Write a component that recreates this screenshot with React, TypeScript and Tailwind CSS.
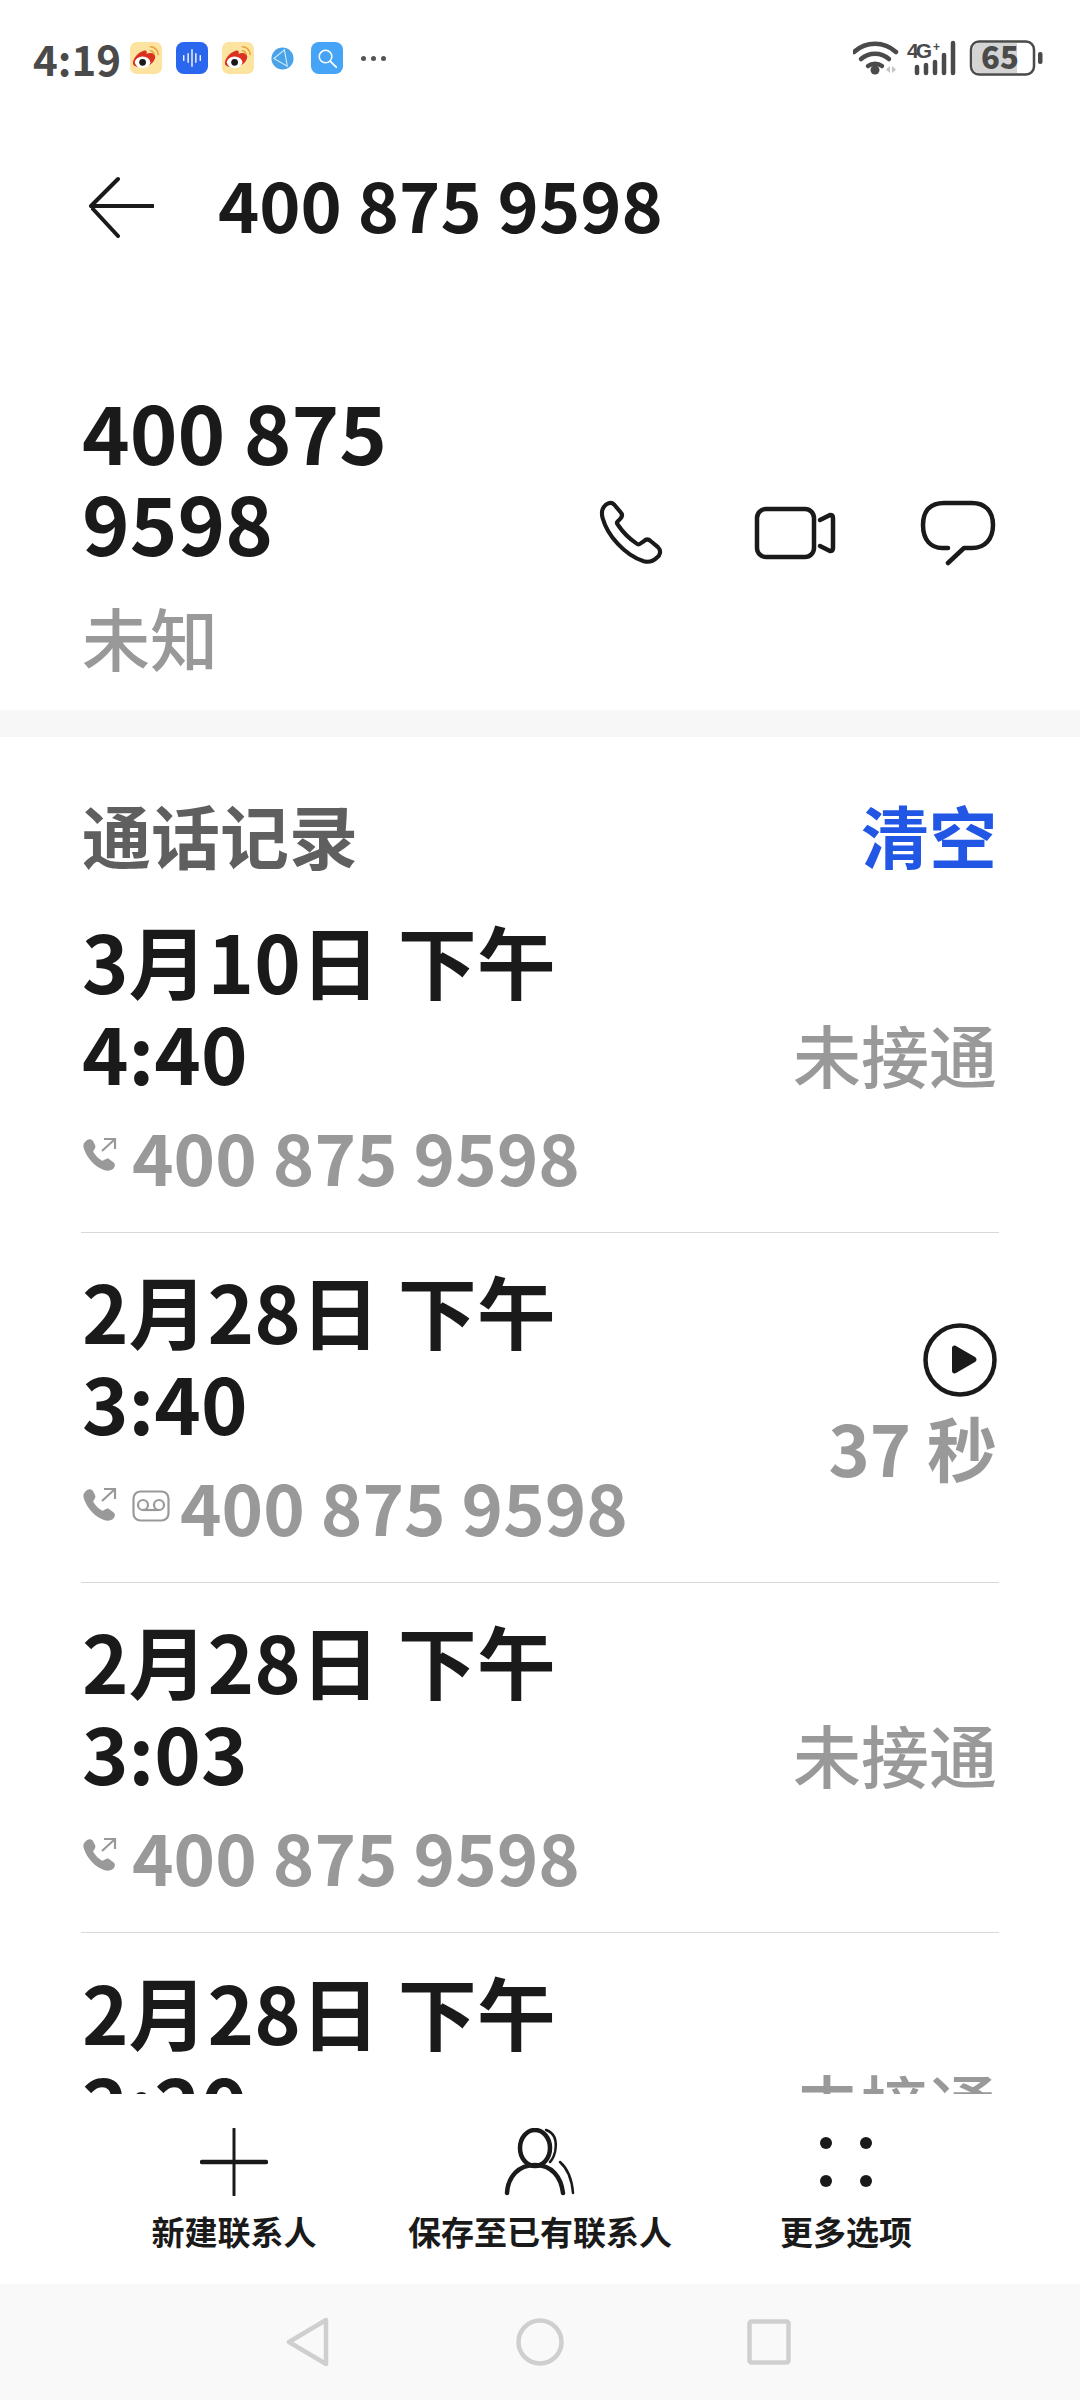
const FONT = "font-['Noto_Sans_CJK_SC','Noto_Sans',sans-serif]";

function WeiboIcon() {
  return (
    <svg width="32" height="32" viewBox="0 0 33 33">
      <rect width="33" height="33" rx="7" fill="#fde3a0" />
      <path d="M3 22c0-5 5-11 11-13 3-1 4 1 3 3 4-1 9-1 9 3 0 6-7 11-14 11-5 0-9-1-9-4z" fill="#d9301f" />
      <ellipse cx="13" cy="21" rx="8" ry="6" fill="#fff" />
      <circle cx="13" cy="21" r="3.5" fill="#1a1a1a" />
      <path d="M21 5c4 0 8 3 8 8M21 9c2 0 4 2 4 4" stroke="#e8a33d" strokeWidth="1.6" fill="none" strokeLinecap="round" />
    </svg>
  );
}

function VoiceIcon() {
  return (
    <svg width="32" height="32" viewBox="0 0 33 33">
      <rect width="33" height="33" rx="8" fill="#2a66ee" />
      <path d="M8 14v5M12.5 12v9M16.500 8v17M20.500 12v9M25 14v5" stroke="#fff" strokeWidth="1.4" strokeLinecap="round" />
    </svg>
  );
}

function GlobeIcon() {
  return (
    <svg width="23" height="23" viewBox="0 0 24 24">
      <circle cx="12" cy="12" r="11.500" fill="#4aa3e8" />
      <path d="M14 3 3 12l14 8zM14 3l3 17M3 12" stroke="#d5ecfb" strokeWidth="1.1" fill="none" />
    </svg>
  );
}

function SearchApp() {
  return (
    <svg width="32" height="32" viewBox="0 0 33 33">
      <rect width="33" height="33" rx="8" fill="#45a4f5" />
      <circle cx="15" cy="15" r="6.500" stroke="#fff" strokeWidth="1.600" fill="none" />
      <path d="m20 20 6 6" stroke="#fff" strokeWidth="1.800" strokeLinecap="round" />
    </svg>
  );
}

function StatusRight() {
  return (
    <svg width="195" height="36" viewBox="0 0 195 36" className="text-[#4a4a4a]">
      <g fill="none" stroke="currentColor" strokeLinecap="round" strokeWidth="4.500">
        <path d="M1 12C13 1 31 1 43 12" />
        <path d="M8 19c8-7 20-7 28 0" />
        <path d="M15 26c4-3 10-3 14 0" />
      </g>
      <circle cx="22" cy="30" r="4.500" fill="currentColor" />
      <path d="M33 29.500l4-3.500v7zM39 26l4 3.500-4 3.500z" fill="#c4c4c4" />
      <text x="54" y="18" fontSize="21" fontWeight="700" fill="currentColor" fontFamily="'Liberation Sans',sans-serif" textLength="25">4G</text>
      <text x="80" y="11" fontSize="12" fontWeight="700" fill="currentColor" fontFamily="'Liberation Sans',sans-serif">+</text>
      <g stroke="currentColor" strokeWidth="4.500" strokeLinecap="round">
        <path d="M64 27v6M73 25v8M82 22v11M91 15v18M100 3v30" />
      </g>
      <rect x="118" y="1.500" width="63" height="33" rx="8" fill="#fff" stroke="currentColor" strokeWidth="2.500" />
      <path d="M120 9c0-4 2-6 6-6h38v30h-38c-4 0-6-2-6-6z" fill="#d4d4d4" />
      <text x="147" y="29" textAnchor="middle" fontSize="31" fontWeight="900" fill="currentColor" fontFamily="'Noto Sans CJK SC',sans-serif">65</text>
      <rect x="185" y="12" width="4.500" height="12" rx="2" fill="currentColor" />
    </svg>
  );
}

function PhoneOutline() {
  return (
    <svg width="66" height="66" viewBox="0 6 56 56" fill="none" stroke="#1a1a1a" strokeWidth="3.500" strokeLinejoin="round">
      <path d="M4 12c2-3 6-5 9-2l5 6c2 2 2 4 0 6l-2 2c-1 1-1 2 0 3 4 6 10 12 16 16 1 1 2 1 3 0l3-2c2-2 4-2 6 0l6 5c3 3 2 7-1 9-3 3-7 4-11 3C22 53 7 36 3 21c-1-4-1-6 1-9z" />
    </svg>
  );
}

function VideoOutline() {
  return (
    <svg width="82" height="54" viewBox="0 0 82 54" fill="none" stroke="#1a1a1a" strokeWidth="4.500" strokeLinejoin="round">
      <rect x="3" y="3" width="57" height="48" rx="9" />
      <path d="M66 14l10-5c2 0 3 1 3 3v30c0 2-1 3-3 3l-10-5" strokeLinecap="round" />
    </svg>
  );
}

function ChatOutline() {
  return (
    <svg width="76" height="66" viewBox="0 0 76 66" fill="none" stroke="#1a1a1a" strokeWidth="4.500" strokeLinecap="round" strokeLinejoin="round">
      <path d="M28 48h-6C11 48 3 40 3 25S11 3 24 3h28c13 0 21 8 21 22s-8 23-21 23h-8L28 63" />
    </svg>
  );
}

function OutgoingCall() {
  return (
    <svg width="38" height="38" viewBox="0 0 38 38" fill="#999999">
      <path d="M3 6c2-3 6-4 8-1l2 4c1 2 0 3-1 5-1 1-1 2 0 3 2 3 4 5 7 7 1 1 2 1 3 0 2-1 4-2 5-1l4 3c3 2 2 5 0 7-3 2-6 2-9 1C13 31 5 22 2 13 1 10 1 8 3 6z" />
      <path d="M20 15 33 3M22 3h11v10" fill="none" stroke="#999999" strokeWidth="2.200" />
    </svg>
  );
}

function VoicemailIcon() {
  return (
    <svg width="38" height="32" viewBox="0 0 38 32" fill="none" stroke="#999999" strokeWidth="2.200">
      <rect x="1.500" y="1.500" width="35" height="29" rx="7" />
      <circle cx="11" cy="15" r="5" />
      <circle cx="27" cy="15" r="5" />
      <path d="M11 20h16" />
    </svg>
  );
}

function PlayCircle() {
  return (
    <svg width="74" height="74" viewBox="0 0 74 74">
      <circle cx="37" cy="37" r="34.500" fill="none" stroke="#1a1a1a" strokeWidth="4.500" />
      <path d="M29 25c0-2 2-3 4-2l19 11c2 1 2 4 0 5L33 50c-2 1-4 0-4-2z" fill="#1a1a1a" />
    </svg>
  );
}

function CallRow({
  date,
  time,
  status,
  voicemail,
  last,
}: {
  date: string;
  time: string;
  status?: string;
  voicemail?: boolean;
  last?: boolean;
}) {
  return (
    <div className={`flex h-[350px] shrink-0 items-center justify-between ${last ? '' : 'border-b border-[#d8d8d8]'}`}>
      <div className="pl-[1px]">
        <div className="text-[79px] leading-[91px] font-bold text-[#1a1a1a]">{date}</div>
        <div className="text-[79px] leading-[91px] font-bold text-[#1a1a1a]">{time}</div>
        <div className="mt-[14px] flex items-center text-[#999999]">
          <span className="mr-[12px] -mt-[1px]">
            <OutgoingCall />
          </span>
          {voicemail && (
            <span className="mr-[10px]">
              <VoicemailIcon />
            </span>
          )}
          <span className="text-[70.5px] leading-[91px] font-bold">400 875 9598</span>
        </div>
      </div>
      {status ? (
        <div className="-mt-[8px] mr-[2px] text-[68px] font-medium text-[#999999]">{status}</div>
      ) : (
        <div className="mr-[2px] flex flex-col items-end gap-[4px]">
          <PlayCircle />
          <div className="text-[70px] leading-[91px] font-semibold text-[#999999]">37 秒</div>
        </div>
      )}
    </div>
  );
}

export default function App() {
  return (
    <div className={`flex h-[2400px] w-[1080px] flex-col overflow-hidden bg-white ${FONT}`}>
      {/* status bar */}
      <div className="flex h-[116px] shrink-0 items-center justify-between pr-[32px] pl-[33px]">
        <div className="flex items-center">
          <span className="mr-[9px] text-[42px] leading-none font-bold text-[#4a4a4a]">4:19</span>
          <div className="flex items-center gap-[14px]">
            <WeiboIcon />
            <VoiceIcon />
            <WeiboIcon />
            <span className="mx-[3px]">
              <GlobeIcon />
            </span>
            <SearchApp />
            <div className="ml-[4px] flex gap-[5px]">
              <span className="h-[5px] w-[5px] rounded-full bg-[#555555]" />
              <span className="h-[5px] w-[5px] rounded-full bg-[#555555]" />
              <span className="h-[5px] w-[5px] rounded-full bg-[#555555]" />
            </div>
          </div>
        </div>
        <StatusRight />
      </div>

      {/* title */}
      <div className="flex h-[178px] shrink-0 items-center pl-[88px]">
        <svg width="66" height="62" viewBox="0 0 66 62" fill="none" stroke="#1a1a1a" strokeWidth="4" strokeLinecap="round" className="mt-[4px]">
          <path d="M3 30h62M30 3 3 30M5 33l25 27" />
        </svg>
        <span className="-mt-[6px] ml-[64px] text-[70px] font-bold text-[#1a1a1a]">400 875 9598</span>
      </div>

      {/* contact */}
      <div className="flex h-[416px] shrink-0 items-start justify-between pt-[90px] pr-[84px] pl-[82px]">
        <div>
          <div className="w-[340px] text-[81px] leading-[91px] font-bold text-[#1a1a1a]">400 875 9598</div>
          <div className="mt-[21px] text-[68px] leading-[100px] font-medium text-[#999999]">未知</div>
        </div>
        <div className="mt-[116px] flex items-center">
          <PhoneOutline />
          <span className="ml-[89px]">
            <VideoOutline />
          </span>
          <span className="ml-[84px]">
            <ChatOutline />
          </span>
        </div>
      </div>

      <div className="h-[27px] shrink-0 bg-[#f7f7f7]" />

      {/* call log */}
      <div className="h-[1357px] shrink-0 overflow-hidden px-[81px]">
        <div className="flex h-[146px] items-center justify-between pt-[50px] pr-[2px] pl-[1px]">
          <span className="text-[69px] font-bold text-[#5f5f5f]">通话记录</span>
          <span className="text-[68px] font-bold text-[#2257e6]">清空</span>
        </div>
        <CallRow date="3月10日 下午" time="4:40" status="未接通" />
        <CallRow date="2月28日 下午" time="3:40" voicemail />
        <CallRow date="2月28日 下午" time="3:03" status="未接通" />
        <CallRow date="2月28日 下午" time="2:20" status="未接通" last />
      </div>

      {/* bottom actions */}
      <div className="grid h-[190px] shrink-0 grid-cols-3 items-start bg-white px-[81px] pt-[34px]">
        <div className="flex flex-col items-center">
          <svg width="68" height="68" viewBox="0 0 68 68" stroke="#1a1a1a" strokeLinecap="round">
            <path d="M34 1v66" strokeWidth="3" />
            <path d="M2 34h64" strokeWidth="4.500" />
          </svg>
          <span className="mt-[13px] text-[33px] leading-[44px] font-bold text-[#1a1a1a]">新建联系人</span>
        </div>
        <div className="flex flex-col items-center">
          <svg width="72" height="68" viewBox="0 0 72 68" fill="none" stroke="#1a1a1a" strokeLinecap="round">
            <ellipse cx="31" cy="20" rx="15" ry="18" strokeWidth="4.500" />
            <path d="M3 65c1-16 11-28 28-28s26 12 28 28" strokeWidth="4.500" />
            <path d="M42 2c9 3 11 12 9 22-1 4-3 8-5 10M56 34c8 7 12 18 13 31" strokeWidth="2.500" />
          </svg>
          <span className="mt-[13px] text-[33px] leading-[44px] font-bold whitespace-nowrap text-[#1a1a1a]">保存至已有联系人</span>
        </div>
        <div className="flex flex-col items-center">
          <div className="grid h-[68px] grid-cols-2 content-between gap-x-[28px] py-[9px]">
            <span className="h-[12px] w-[12px] rounded-full bg-[#1a1a1a]" />
            <span className="h-[12px] w-[12px] rounded-full bg-[#1a1a1a]" />
            <span className="h-[12px] w-[12px] rounded-full bg-[#1a1a1a]" />
            <span className="h-[12px] w-[12px] rounded-full bg-[#1a1a1a]" />
          </div>
          <span className="mt-[13px] text-[33px] leading-[44px] font-bold text-[#1a1a1a]">更多选项</span>
        </div>
      </div>

      {/* nav bar */}
      <div className="flex h-[116px] shrink-0 items-center bg-[#f9f9f9] pl-[286px]">
        <svg width="44" height="50" viewBox="0 0 44 50" fill="none" stroke="#cfcfcf" strokeWidth="4.500" strokeLinejoin="round">
          <path d="M40 3v44L3 25z" />
        </svg>
        <svg width="48" height="48" viewBox="0 0 48 48" fill="none" stroke="#cfcfcf" strokeWidth="4.500" className="ml-[186px]">
          <circle cx="24" cy="24" r="21.500" />
        </svg>
        <svg width="44" height="46" viewBox="0 0 44 46" fill="none" stroke="#cfcfcf" strokeWidth="4.500" strokeLinejoin="round" className="ml-[183px]">
          <rect x="2.500" y="2.500" width="39" height="41" rx="2" />
        </svg>
      </div>
    </div>
  );
}
